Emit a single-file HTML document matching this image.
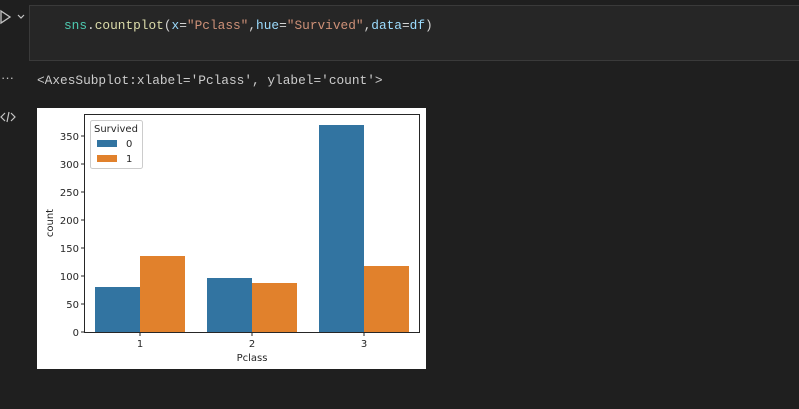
<!DOCTYPE html>
<html><head><style>
body{margin:0;width:799px;height:409px;background:#1f1f1f;overflow:hidden;position:relative;font-family:"Liberation Mono",monospace}
.cell{position:absolute;left:29px;top:5px;width:775px;height:56px;background:#262626;border:1px solid #3a3a3a;box-sizing:border-box}
.code{position:absolute;left:64px;top:18px;font-size:12.8px;color:#d4d4d4;white-space:pre}
.out{position:absolute;left:37px;top:73px;font-size:12.8px;color:#cccccc;white-space:pre}
.g{position:absolute;color:#c5c5c5;font-family:"Liberation Sans",sans-serif}
</style></head><body>
<div class="cell"></div>
<div class="code"><span style="color:#4ec9b0">sns</span>.<span style="color:#dcdcaa">countplot</span>(<span style="color:#9cdcfe">x</span>=<span style="color:#ce9178">"Pclass"</span>,<span style="color:#9cdcfe">hue</span>=<span style="color:#ce9178">"Survived"</span>,<span style="color:#9cdcfe">data</span>=<span style="color:#9cdcfe">df</span>)</div>
<svg class="g" style="left:0;top:9px" width="28" height="16"><path d="M1 2 L10 8 L1 14 Z" fill="none" stroke="#c5c5c5" stroke-width="1.3"/><path d="M18 6 L21 9 L24 6" fill="none" stroke="#c5c5c5" stroke-width="1.2"/></svg>
<div class="g" style="left:1px;top:70px;font-size:13px">···</div>
<svg class="g" style="left:0;top:111px" width="16" height="12"><path d="M5 2 L1 6 L5 10 M11 2 L15 6 L11 10 M9 1 L7 11" fill="none" stroke="#c5c5c5" stroke-width="1.2"/></svg>
<div class="out">&lt;AxesSubplot:xlabel='Pclass', ylabel='count'&gt;</div>
<svg style="position:absolute;left:37px;top:108px" width="389" height="261" font-family="DejaVu Sans,sans-serif" font-size="10" fill="#262626">
<rect width="389" height="261" fill="#fff"/>
<g transform="translate(-37,-108)">
<rect x="95" y="287" width="45" height="45" fill="#3274a1"/>
<rect x="140" y="256" width="45" height="76" fill="#e1812c"/>
<rect x="207" y="278" width="45" height="54" fill="#3274a1"/>
<rect x="252" y="283" width="45" height="49" fill="#e1812c"/>
<rect x="319" y="125" width="45" height="207" fill="#3274a1"/>
<rect x="364" y="266" width="45" height="66" fill="#e1812c"/>
<rect x="84.5" y="114.5" width="335" height="218" fill="none" stroke="#262626" stroke-width="1"/>
<g stroke="#262626">
<line x1="81" x2="84" y1="332" y2="332"/><line x1="81" x2="84" y1="304" y2="304"/><line x1="81" x2="84" y1="276" y2="276"/><line x1="81" x2="84" y1="248" y2="248"/><line x1="81" x2="84" y1="220" y2="220"/><line x1="81" x2="84" y1="192" y2="192"/><line x1="81" x2="84" y1="164" y2="164"/><line x1="81" x2="84" y1="136" y2="136"/>
<line x1="140" x2="140" y1="333" y2="336"/><line x1="252" x2="252" y1="333" y2="336"/><line x1="364" x2="364" y1="333" y2="336"/>
</g>
<g text-anchor="end">
<text x="79" y="336">0</text><text x="79" y="308">50</text><text x="79" y="280">100</text><text x="79" y="252">150</text><text x="79" y="224">200</text><text x="79" y="196">250</text><text x="79" y="168">300</text><text x="79" y="140">350</text>
</g>
<g text-anchor="middle">
<text x="140" y="347">1</text><text x="252" y="347">2</text><text x="364" y="347">3</text>
<text x="252" y="361">Pclass</text>
<text transform="translate(53,223) rotate(-90)">count</text>
</g>
<rect x="90.5" y="120.5" width="52" height="48" rx="2" fill="#fff" stroke="#ccc"/>
<text x="94" y="132">Survived</text>
<rect x="97" y="140" width="20" height="7" fill="#3274a1"/><text x="126" y="147">0</text>
<rect x="97" y="155" width="20" height="7" fill="#e1812c"/><text x="126" y="162">1</text>
</g>
</svg>
</body></html>
